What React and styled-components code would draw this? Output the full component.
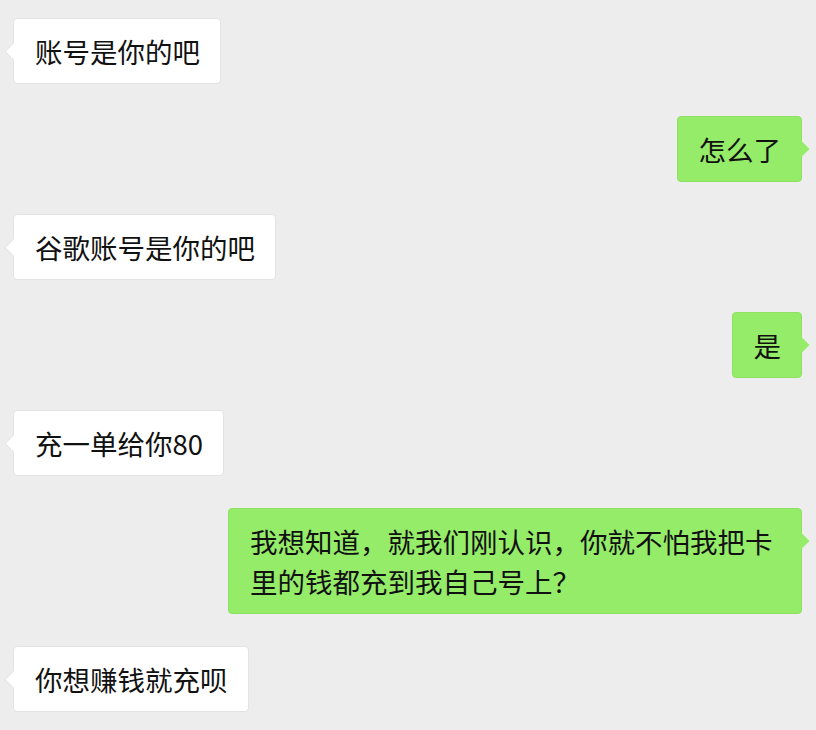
import React from "react";
import styled, { createGlobalStyle, css } from "styled-components";

const Global = createGlobalStyle`
  html, body { margin: 0; padding: 0; background: #ededed; }
  body { font-family: "Noto Sans CJK SC", "Noto Sans", sans-serif; }
`;

const Page = styled.div`
  width: 816px;
  height: 730px;
  box-sizing: border-box;
  padding: 18px 14px 0 13px;
  display: flex;
  flex-direction: column;
  gap: 32px;
  background: #ededed;
  overflow: hidden;
`;

const Row = styled.div`
  display: flex;
  justify-content: ${(p) => (p.$mine ? "flex-end" : "flex-start")};
`;

const Bubble = styled.div`
  position: relative;
  box-sizing: border-box;
  max-width: 574px;
  padding: 12px 20px 12px 21px;
  font-size: 27.5px;
  line-height: 40px;
  color: #111;
  border-radius: 4px;
  word-break: break-all;
  ${(p) =>
    p.$mine
      ? css`
          background: #95ec69;
          border: 1px solid #8fe062;
        `
      : css`
          background: #ffffff;
          border: 1px solid #e3e3e3;
        `}

  &::before {
    content: "";
    position: absolute;
    top: 26px;
    width: 12px;
    height: 12px;
    transform: rotate(45deg);
    ${(p) =>
      p.$mine
        ? css`
            right: -6px;
            background: #95ec69;
          `
        : css`
            left: -7px;
            background: #ffffff;
            border-left: 1px solid #e3e3e3;
            border-bottom: 1px solid #e3e3e3;
          `}
  }
`;

const messages = [
  { mine: false, text: "账号是你的吧" },
  { mine: true, text: "怎么了" },
  { mine: false, text: "谷歌账号是你的吧" },
  { mine: true, text: "是" },
  { mine: false, text: "充一单给你80" },
  { mine: true, text: "我想知道，就我们刚认识，你就不怕我把卡里的钱都充到我自己号上？" },
  { mine: false, text: "你想赚钱就充呗" },
];

export default function App() {
  return (
    <>
      <Global />
      <Page>
        {messages.map((m, i) => (
          <Row key={i} $mine={m.mine}>
            <Bubble $mine={m.mine}>{m.text}</Bubble>
          </Row>
        ))}
      </Page>
    </>
  );
}
